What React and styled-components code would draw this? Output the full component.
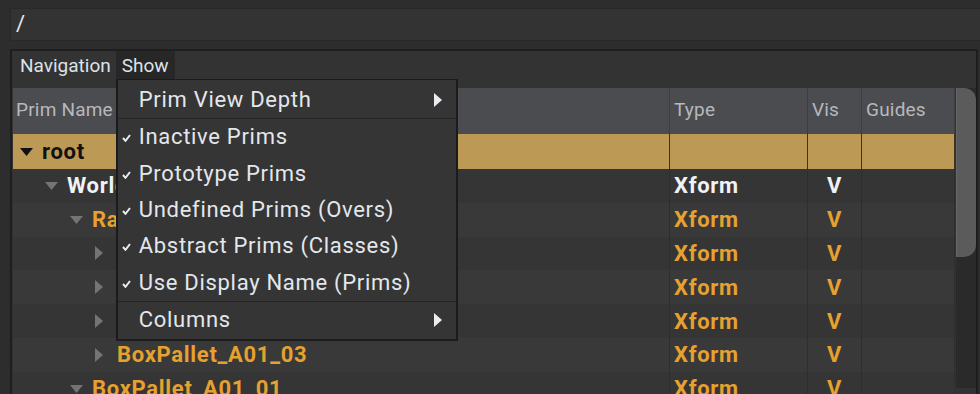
import React from 'react';
import styled, { createGlobalStyle } from 'styled-components';

const GlobalStyle = createGlobalStyle`
  html, body {
    margin: 0;
    padding: 0;
    background: #2d2d2d;
  }
  body {
    font-family: Roboto, "Noto Sans", "Liberation Sans", sans-serif;
  }
`;

const Page = styled.div`
  width: 980px;
  height: 394px;
  box-sizing: border-box;
  padding: 8px 0 0 10px;
  overflow: hidden;
  background: #2d2d2d;
`;

const PathField = styled.div`
  height: 33px;
  box-sizing: border-box;
  border: 1px solid #282828;
  border-right: none;
  background: #333333;
  color: #e6e9ee;
  font-size: 22px;
  line-height: 30px;
  padding-left: 5px;
`;

const Panel = styled.div`
  margin-top: 8px;
  margin-right: 2px;
  border: 2px solid #1e1e1e;
  border-bottom: none;
  background: #333333;
  height: 400px;
`;

const MenuBar = styled.div`
  display: flex;
  height: 30px;
`;

const MenuTitle = styled.div`
  position: relative;
  padding: 0 ${(p) => (p.$first ? '5px 0 8px' : '6px 0 6px')};
  font-size: 19px;
  line-height: 30px;
  color: #dde2e8;
  background: ${(p) => (p.$open ? '#272727' : 'transparent')};
  border-radius: 2px 2px 0 0;
`;

const Dropdown = styled.div`
  position: absolute;
  top: 28px;
  left: 0;
  width: 342px;
  box-sizing: border-box;
  background: #353535;
  border: 2px solid #1b1b1b;
  border-top-width: 1px;
  padding-top: 1px;
  z-index: 10;
  letter-spacing: 0.7px;
`;

const DropItem = styled.div`
  position: relative;
  height: ${(p) => (p.$tall ? '37px' : '36.4px')};
  display: flex;
  align-items: center;
  padding-left: 21px;
  font-size: 22px;
  color: #e3e7ec;
  white-space: nowrap;
`;

const Separator = styled.div`
  height: 1px;
  background: #242424;
`;

const Check = styled.svg`
  position: absolute;
  left: 4px;
  top: 50%;
  margin-top: -3px;
`;

const SubArrow = styled.svg`
  position: absolute;
  right: 14px;
  top: 50%;
  margin-top: -7px;
`;

const TableArea = styled.div`
  display: flex;
  margin-top: 7px;
  padding-left: 1px;
`;

const Table = styled.div`
  width: 942px;
`;

const Row = styled.div`
  display: grid;
  grid-template-columns: 657px 138px 54px 93px;
  height: ${(p) => p.$h || '33.8px'};
  background: ${(p) => p.$bg};
`;

const Cell = styled.div`
  display: flex;
  align-items: center;
  box-sizing: border-box;
  border-right: 1px solid ${(p) => p.$line || '#2e2e2e'};
  overflow: hidden;
  white-space: nowrap;
  justify-content: ${(p) => (p.$center ? 'center' : 'flex-start')};
  padding-left: ${(p) => p.$pad || 0}px;
  font-size: 22px;
  letter-spacing: 0.7px;
  font-weight: 700;
  color: ${(p) => p.$color || '#f0f2f5'};
`;

const HeadCell = styled(Cell)`
  font-size: 19px;
  letter-spacing: 0.2px;
  font-weight: 400;
  color: #b6b8bc;
  border-right-color: #3d3e42;
  padding-bottom: 3px;
`;

const ArrowBox = styled.span`
  display: inline-flex;
  width: 22px;
  flex: none;
  align-items: center;
  justify-content: flex-start;
`;

const Scrollbar = styled.div`
  width: 21px;
  margin-left: 1px;
  background: #2a2a2a;
  height: 300px;
`;

const Handle = styled.div`
  height: 169px;
  background: #5b5b5b;
  border-left: 1px solid #666;
  border-radius: 0 12px 12px 0;
`;

const DownTri = ({ color }) => (
  <svg width="13" height="8" viewBox="0 0 13 8">
    <path d="M0 0 H13 L6.5 8 Z" fill={color} />
  </svg>
);

const RightTri = ({ color }) => (
  <svg width="8" height="14" viewBox="0 0 8 14">
    <path d="M0 0 L8 7 L0 14 Z" fill={color} />
  </svg>
);

const menuItems = [
  { label: 'Prim View Depth', sub: true, tall: true },
  'sep',
  { label: 'Inactive Prims', checked: true },
  { label: 'Prototype Prims', checked: true },
  { label: 'Undefined Prims (Overs)', checked: true },
  { label: 'Abstract Prims (Classes)', checked: true },
  { label: 'Use Display Name (Prims)', checked: true },
  'sep',
  { label: 'Columns', sub: true, tall: true },
];

const ORANGE = '#e6a12f';

const rows = [
  { name: 'World', level: 1, open: 'down', color: '#f0f2f5' },
  { name: 'Rack_A01', level: 2, open: 'down', color: ORANGE },
  { name: 'BoxPallet_A01_00', level: 3, open: 'right', color: ORANGE },
  { name: 'BoxPallet_A01_01', level: 3, open: 'right', color: ORANGE },
  { name: 'BoxPallet_A01_02', level: 3, open: 'right', color: ORANGE },
  { name: 'BoxPallet_A01_03', level: 3, open: 'right', color: ORANGE },
  { name: 'BoxPallet_A01_01', level: 2, open: 'down', color: ORANGE },
];

const ShowMenu = () => (
  <Dropdown>
    {menuItems.map((item, i) =>
      item === 'sep' ? (
        <Separator key={i} />
      ) : (
        <DropItem key={i} $tall={item.tall}>
          {item.checked && (
            <Check width="9" height="8" viewBox="0 0 9 8">
              <path d="M1 4 L3.5 6.8 L8 1" stroke="#e8ecf0" strokeWidth="2" fill="none" />
            </Check>
          )}
          {item.label}
          {item.sub && (
            <SubArrow width="8" height="14" viewBox="0 0 8 14">
              <path d="M0 0 L8 7 L0 14 Z" fill="#e8ecf0" />
            </SubArrow>
          )}
        </DropItem>
      )
    )}
  </Dropdown>
);

export default function App() {
  return (
    <Page>
      <GlobalStyle />
      <PathField>/</PathField>
      <Panel>
        <MenuBar>
          <MenuTitle $first>Navigation</MenuTitle>
          <MenuTitle $open>
            Show
            <ShowMenu />
          </MenuTitle>
        </MenuBar>
        <TableArea>
          <Table>
            <Row $bg="#4b4c50" $h="46px">
              <HeadCell $pad={3}>Prim Name</HeadCell>
              <HeadCell $pad={4}>Type</HeadCell>
              <HeadCell $pad={4}>Vis</HeadCell>
              <HeadCell $pad={4}>Guides</HeadCell>
            </Row>
            <Row $bg="#bc9a56" $h="35px">
              <Cell $pad={7} $color="#111" $line="#3a3228">
                <ArrowBox><DownTri color="#111" /></ArrowBox>
                root
              </Cell>
              <Cell $line="#3a3228" />
              <Cell $line="#3a3228" />
              <Cell $line="#3a3228" />
            </Row>
            {rows.map((r, i) => (
              <Row key={i} $bg={i % 2 === 0 ? '#353535' : '#393939'}>
                <Cell $pad={7 + r.level * 25} $color={r.color}>
                  <ArrowBox>
                    {r.open === 'down' ? <DownTri color="#747474" /> : <RightTri color="#747474" />}
                  </ArrowBox>
                  {r.name}
                </Cell>
                <Cell $pad={4} $color={r.color}>Xform</Cell>
                <Cell $center $color={r.color}>V</Cell>
                <Cell />
              </Row>
            ))}
          </Table>
          <Scrollbar>
            <Handle />
          </Scrollbar>
        </TableArea>
      </Panel>
    </Page>
  );
}
